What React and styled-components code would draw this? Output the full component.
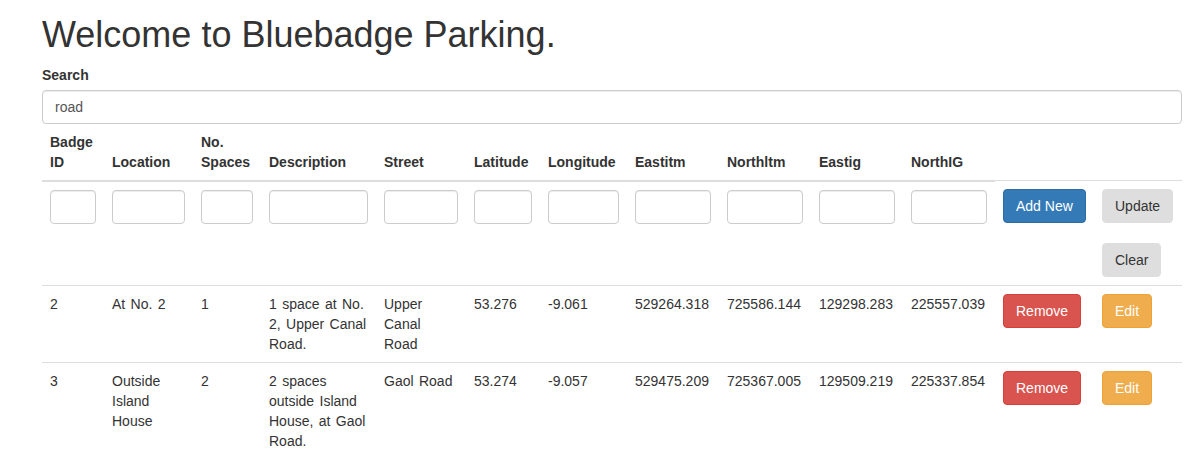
import styled, { createGlobalStyle } from "styled-components";

const GlobalStyle = createGlobalStyle`
  * {
    box-sizing: border-box;
  }
  body {
    margin: 0;
    background: #fff;
    color: #333;
    font-family: "Liberation Sans", Arial, sans-serif;
    font-size: 14px;
    line-height: 20px;
  }
`;

const Container = styled.div`
  width: 1140px;
  margin-left: 42px;
`;

const Title = styled.h1`
  margin: 15px 0 10px;
  font-size: 36px;
  font-weight: 500;
  line-height: 1.1;
  color: #333;
`;

const Label = styled.label`
  display: block;
  margin-bottom: 5px;
  font-weight: bold;
`;

const Input = styled.input`
  display: block;
  width: 100%;
  height: 34px;
  padding: 6px 12px;
  font-family: inherit;
  font-size: 14px;
  color: #555;
  background: #fff;
  border: 1px solid #ccc;
  border-radius: 4px;
  box-shadow: inset 0 1px 1px rgba(0, 0, 0, 0.075);
  outline: none;
`;

const Table = styled.table`
  width: 100%;
  table-layout: fixed;
  border-collapse: collapse;
  border-spacing: 0;
`;

const Th = styled.th`
  padding: 8px;
  text-align: left;
  vertical-align: bottom;
  font-weight: bold;
  border-bottom: 2px solid #ddd;
`;

const Td = styled.td`
  padding: 8px;
  vertical-align: top;
  word-spacing: 1.5px;
  border-top: 1px solid #ddd;
`;

const palette = {
  primary: ["#337ab7", "#2e6da4", "#fff"],
  danger: ["#d9534f", "#d43f3a", "#fff"],
  warning: ["#f0ad4e", "#eea236", "#fff"],
  plain: ["#dedede", "#dedede", "#333"],
};

const Button = styled.button`
  display: inline-block;
  height: 34px;
  padding: 6px 12px;
  font-family: inherit;
  font-size: 14px;
  line-height: 20px;
  word-spacing: 0;
  border-radius: 4px;
  cursor: pointer;
  background: ${(p) => palette[p.$kind][0]};
  border: 1px solid ${(p) => palette[p.$kind][1]};
  color: ${(p) => palette[p.$kind][2]};
`;

const ButtonStack = styled.div`
  display: flex;
  flex-direction: column;
  align-items: flex-start;
  gap: 20px;
`;

const widths = [62, 89, 68, 115, 90, 74, 87, 92, 92, 92, 92, 99, 88];

const headers = [
  "Badge ID",
  "Location",
  "No. Spaces",
  "Description",
  "Street",
  "Latitude",
  "Longitude",
  "Eastitm",
  "Northltm",
  "Eastig",
  "NorthIG",
];

const rows = [
  ["2", "At No. 2", "1", "1 space at No. 2, Upper Canal Road.", "Upper Canal Road", "53.276", "-9.061", "529264.318", "725586.144", "129298.283", "225557.039"],
  ["3", "Outside Island House", "2", "2 spaces outside Island House, at Gaol Road.", "Gaol Road", "53.274", "-9.057", "529475.209", "725367.005", "129509.219", "225337.854"],
];

export default function App() {
  return (
    <>
      <GlobalStyle />
      <Container>
        <Title>Welcome to Bluebadge Parking.</Title>
        <Label>Search</Label>
        <Input defaultValue="road" />
        <Table>
          <colgroup>
            {widths.map((w, i) => (
              <col key={i} style={{ width: w }} />
            ))}
          </colgroup>
          <thead>
            <tr>
              {headers.map((h) => (
                <Th key={h}>{h}</Th>
              ))}
            </tr>
          </thead>
          <tbody>
            <tr>
              {headers.map((h) => (
                <Td key={h}>
                  <Input />
                </Td>
              ))}
              <Td>
                <Button $kind="primary">Add New</Button>
              </Td>
              <Td>
                <ButtonStack>
                  <Button $kind="plain">Update</Button>
                  <Button $kind="plain">Clear</Button>
                </ButtonStack>
              </Td>
            </tr>
            {rows.map((r) => (
              <tr key={r[0]}>
                {r.map((c, i) => (
                  <Td key={i}>{c}</Td>
                ))}
                <Td>
                  <Button $kind="danger">Remove</Button>
                </Td>
                <Td>
                  <Button $kind="warning">Edit</Button>
                </Td>
              </tr>
            ))}
          </tbody>
        </Table>
      </Container>
    </>
  );
}
